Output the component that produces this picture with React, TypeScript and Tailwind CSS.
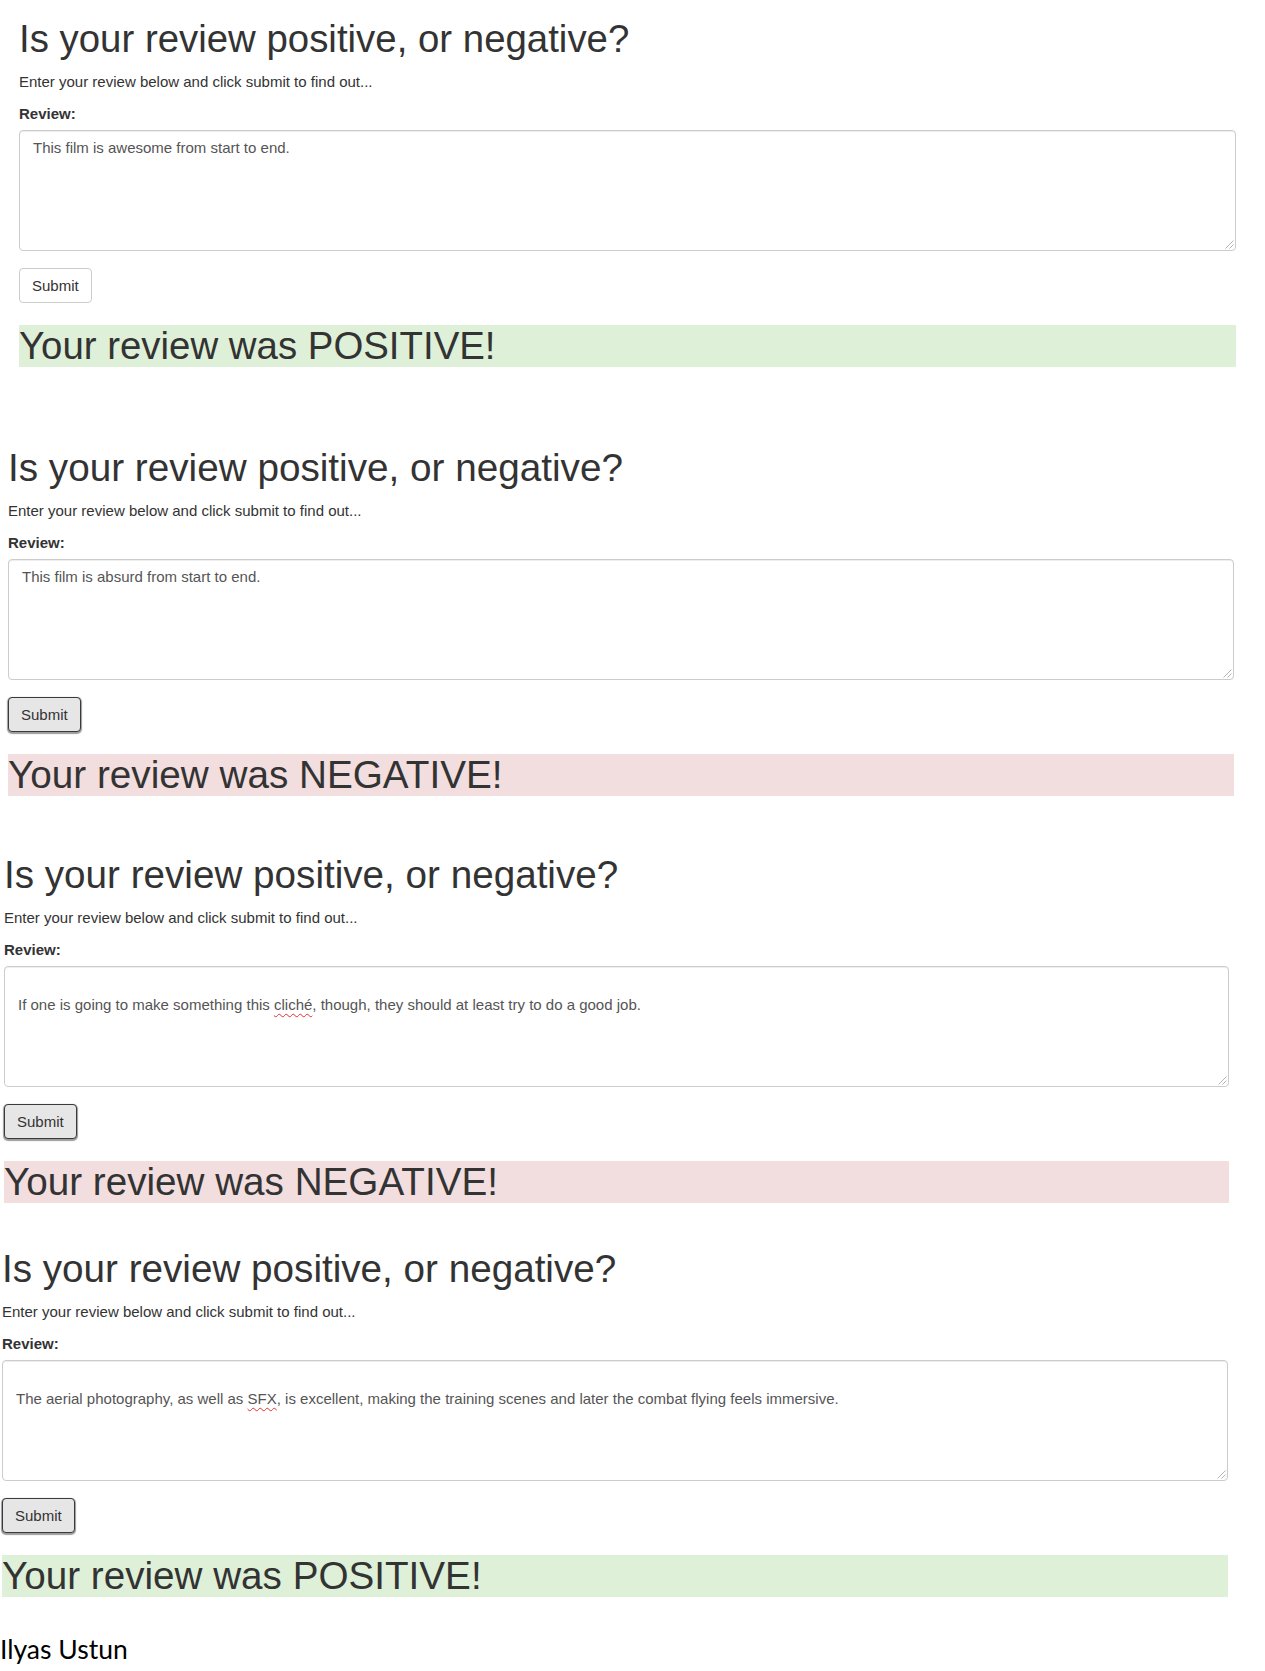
type Review = {
  box: string;
  big: string;
  before: string;
  flagged?: string;
  after?: string;
  blankFirst?: boolean;
  positive: boolean;
  pressed: boolean;
};

const reviews: Review[] = [
  {
    box: "ml-[19px] w-[1217px] mt-[18px]",
    big: "text-[38.4px]",
    before: "This film is awesome from start to end.",
    positive: true,
    pressed: false
  },
  {
    box: "ml-[8px] w-[1226px] mt-[80px]",
    big: "text-[38.7px]",
    before: "This film is absurd from start to end.",
    positive: false,
    pressed: true
  },
  {
    box: "ml-[4px] w-[1225px] mt-[58px]",
    big: "text-[38.65px]",
    before: "If one is going to make something this ",
    flagged: "cliché",
    after: ", though, they should at least try to do a good job.",
    blankFirst: true,
    positive: false,
    pressed: true
  },
  {
    box: "ml-[2px] w-[1226px] mt-[45px]",
    big: "text-[38.65px]",
    before: "The aerial photography, as well as ",
    flagged: "SFX",
    after: ", is excellent, making the training scenes and later the combat flying feels immersive.",
    blankFirst: true,
    positive: true,
    pressed: true
  }
];

function ResizeGrip() {
  return (
    <svg className="absolute bottom-[1px] right-[1px]" width="10" height="10" viewBox="0 0 10 10" aria-hidden="true">
      <line x1="9.5" y1="1.5" x2="1.5" y2="9.5" stroke="#b5b5b5" strokeWidth="1" />
      <line x1="9.5" y1="5.5" x2="5.5" y2="9.5" stroke="#b5b5b5" strokeWidth="1" />
    </svg>
  );
}

function ReviewForm({ review }: { review: Review }) {
  return (
    <section className={`flex flex-col ${review.box}`}>
      <h1 className={`h-[42px] leading-[42px] font-normal text-[#333] whitespace-nowrap ${review.big}`}>
        Is your review positive, or negative?
      </h1>
      <p className="mt-[11px] text-[15px] leading-[21px] text-[#333]">Enter your review below and click submit to find out...</p>
      <label className="mt-[11px] text-[15px] leading-[21px] font-bold text-[#333]">Review:</label>
      <div
        role="textbox"
        className="relative mt-[6px] h-[121px] rounded-[4px] border border-[#ccc] bg-white px-[13px] py-[6px] text-[15px] leading-[21px] text-[#555] shadow-[inset_0_1px_1px_rgba(0,0,0,0.075)]"
      >
        {review.blankFirst && <div className="h-[21px]" />}
        <div>
          {review.before}
          {review.flagged && (
            <span className="underline decoration-wavy decoration-[#e53030] decoration-1 underline-offset-[3px]">{review.flagged}</span>
          )}
          {review.after}
        </div>
        <ResizeGrip />
      </div>
      <button
        type="button"
        className={
          review.pressed
            ? "mt-[17px] h-[35px] self-start rounded-[4px] border border-[#3a3a3a] bg-[#e6e6e6] px-[12px] text-[15px] leading-[21px] text-[#333] shadow-[0_1px_1px_1px_#9c9c9c]"
            : "mt-[17px] h-[35px] self-start rounded-[4px] border border-[#ccc] bg-white px-[12px] text-[15px] leading-[21px] text-[#333]"
        }
      >
        Submit
      </button>
      <h1
        className={
          review.positive
            ? `mt-[22px] h-[42px] bg-[#dff0d8] leading-[42px] font-normal text-[#333] ${review.big}`
            : `mt-[22px] h-[42px] bg-[#f2dede] leading-[42px] font-normal text-[#333] ${review.big}`
        }
      >
        {review.positive ? "Your review was POSITIVE!" : "Your review was NEGATIVE!"}
      </h1>
    </section>
  );
}

export default function App() {
  return (
    <div className="flex min-h-[1671px] flex-col bg-white font-['Liberation_Sans',Arial,sans-serif]">
      {reviews.map((r, i) => (
        <ReviewForm key={i} review={r} />
      ))}
      <div className="mt-[36px] font-['Lato',sans-serif] text-[26.5px] leading-[32px] text-black">Ilyas Ustun</div>
    </div>
  );
}
